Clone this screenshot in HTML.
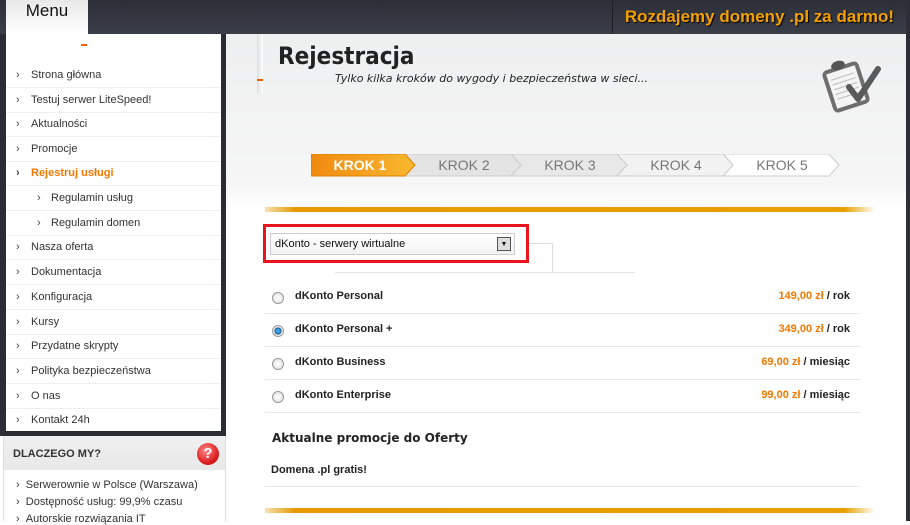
<!DOCTYPE html>
<html><head><meta charset="utf-8"><style>
*{margin:0;padding:0;box-sizing:border-box}
body{width:910px;height:521px;overflow:hidden;background:#fff;font-family:"Liberation Sans",sans-serif;position:relative}
.top{position:absolute;left:0;top:0;width:910px;height:34px;background:linear-gradient(#2c2f38,#3a3e48)}
.promo{position:absolute;left:612px;top:0;width:294px;height:34px;border-left:1px solid #1c1e24;color:#f5a000;font-weight:bold;font-size:17px;line-height:34px;text-align:center;text-shadow:1px 1px 1px #000}
.rightedge{position:absolute;left:906px;top:0;width:4px;height:521px;background:#2c2f38}
.tab{position:absolute;left:6px;top:0;width:82px;height:34px;background:linear-gradient(#e9e9e9,#fff);font-size:17px;text-align:center;line-height:22px;color:#111}
.sidebar{position:absolute;left:0;top:34px;width:226px;height:402px;background:#2a2d36}
.menu{position:absolute;left:6px;top:34px;width:215px;height:397px;background:#fff}
.menu div{position:absolute;left:0;width:215px;height:25px;font-size:11px;color:#333;line-height:25px;padding-left:25px;border-bottom:1px solid #eee}
.menu div:before{content:"›";position:absolute;left:10px;color:#444}
.menu .sub{padding-left:45px}.menu .sub:before{left:31px}
.menu .act{color:#f07800;font-weight:bold}
.why{position:absolute;left:3px;top:436px;width:223px;height:85px;background:#fff;border-left:1px solid #ddd;border-right:1px solid #ddd}
.why h{position:absolute;left:0;top:0;width:221px;height:34px;background:linear-gradient(#f0f0f0,#e8e8e8);font-weight:bold;font-size:11px;color:#333;line-height:36px;padding-left:9px}
.why .q{position:absolute;left:193px;top:7px;width:22px;height:22px;border-radius:50%;background:radial-gradient(circle at 40% 35%,#f88,#d22 60%,#a00);color:#fff;font-weight:bold;font-size:15px;text-align:center;line-height:22px}
.why p{position:absolute;left:12px;font-size:11px;color:#333}
.main{position:absolute;left:226px;top:34px;width:680px;height:487px;background:linear-gradient(#eeeff0 0px,#f6f6f6 150px,#fff 175px)}
h1{position:absolute;left:278px;top:42px;font-size:24px;color:#222;font-family:"DejaVu Sans Condensed","DejaVu Sans",sans-serif;font-weight:bold}
.sub1{position:absolute;left:335px;top:72px;font-size:11px;font-style:italic;color:#222;font-family:"DejaVu Sans",sans-serif}
.ora{position:absolute;left:265px;top:207px;width:610px;height:5px;background:linear-gradient(90deg,rgba(230,150,0,.3),#e69a00 5%,#e8a000 95%,rgba(240,170,0,0))}
.red{position:absolute;left:263px;top:224px;width:266px;height:39px;border:3px solid #e8141e}
.sel{position:absolute;left:270px;top:233px;width:245px;height:22px;border:1px solid #ccc;background:linear-gradient(#fff,#f3f3f3);font-size:11px;line-height:20px;padding-left:4px;color:#111}
.sel b{position:absolute;right:3px;top:3px;width:14px;height:14px;border:1px solid #555;background:#ddd;font-size:7px;line-height:13px;text-align:center}
.row{position:absolute;left:265px;width:595px;height:33px;border-bottom:1px solid #e8e8e8;font-size:11px;font-weight:bold;color:#222}
.row .r{position:absolute;left:7px;top:11px;width:12px;height:12px;border-radius:50%;border:1px solid #999;background:radial-gradient(#fff,#ddd)}
.row .r.on{background:radial-gradient(#3a9ee0 30%,#0b4a80 45%,#eee 55%)}
.row .n{position:absolute;left:30px;top:9px}
.row .p{position:absolute;right:10px;top:9px}
.row .p i{font-style:normal;color:#f07800}
</style></head><body>
<div class="top"></div>
<div class="promo">Rozdajemy domeny .pl za darmo!</div>
<div class="sidebar"></div>
<div class="tab">Menu</div>
<div class="menu">
<div style="top:29px">Strona główna</div>
<div style="top:54px">Testuj serwer LiteSpeed!</div>
<div style="top:78px">Aktualności</div>
<div style="top:103px">Promocje</div>
<div style="top:127px" class="act">Rejestruj usługi</div>
<div style="top:152px" class="sub">Regulamin usług</div>
<div style="top:177px" class="sub">Regulamin domen</div>
<div style="top:201px">Nasza oferta</div>
<div style="top:226px">Dokumentacja</div>
<div style="top:251px">Konfiguracja</div>
<div style="top:276px">Kursy</div>
<div style="top:300px">Przydatne skrypty</div>
<div style="top:325px">Polityka bezpieczeństwa</div>
<div style="top:350px">O nas</div>
<div style="top:372px;border:0;top:374px;height:23px">Kontakt 24h</div>
</div>
<div class="main"></div>
<div class="rightedge"></div>
<div style="position:absolute;left:81px;top:44px;width:6px;height:2px;background:#f06000"></div>
<div style="position:absolute;left:257px;top:34px;width:6px;height:60px;background:linear-gradient(90deg,#ddd,#fff)"></div>
<div style="position:absolute;left:257px;top:79px;width:6px;height:2px;background:#f06000"></div>
<div class="why"><h>DLACZEGO MY?</h><div class="q">?</div>
<p style="top:43px">› &nbsp;Serwerownie w Polsce (Warszawa)</p>
<p style="top:60px">› &nbsp;Dostępność usług: 99,9% czasu</p>
<p style="top:77px">› &nbsp;Autorskie rozwiązania IT</p></div>
<h1>Rejestracja</h1>
<div class="sub1">Tylko kilka kroków do wygody i bezpieczeństwa w sieci...</div>
<svg style="position:absolute;left:822px;top:55px" width="62" height="58" viewBox="0 0 62 58">
<g transform="rotate(-18 24 32)">
<rect x="5" y="10" width="38" height="44" rx="5" fill="#6e6e6e"/>
<rect x="9" y="14" width="30" height="36" fill="#f4f4f4"/>
<g stroke="#bbb"><line x1="12" y1="21" x2="36" y2="21"/><line x1="12" y1="26" x2="36" y2="26"/><line x1="12" y1="31" x2="36" y2="31"/><line x1="12" y1="36" x2="36" y2="36"/><line x1="12" y1="41" x2="36" y2="41"/></g>
<ellipse cx="23" cy="9" rx="7" ry="4.5" fill="#555"/>
</g>
<path d="M27 32 L36 44 L56 14" fill="none" stroke="#5a5a5a" stroke-width="6" stroke-linejoin="round" stroke-linecap="round"/>
</svg>
<svg style="position:absolute;left:311px;top:154px" width="530" height="23">
<defs><linearGradient id="o" x1="0" x2="1"><stop offset="0" stop-color="#f08a10"/><stop offset="1" stop-color="#f8b830"/></linearGradient></defs>
<polygon points="518,0 528,11 518,22 412,22 422,11 412,0" fill="#fff" stroke="#ccc"/>
<polygon points="412,0 422,11 412,22 306,22 316,11 306,0" fill="#f2f2f2" stroke="#ccc"/>
<polygon points="306,0 316,11 306,22 200,22 210,11 200,0" fill="#e8e8e8" stroke="#ccc"/>
<polygon points="200,0 210,11 200,22 94,22 104,11 94,0" fill="#e4e4e4" stroke="#ccc"/>
<polygon points="0,0 94,0 104,11 94,22 0,22" fill="url(#o)" stroke="#e08000"/>
<g font-family="Liberation Sans" font-size="14" text-anchor="middle" fill="#777"><text x="49" y="16" fill="#fff" font-weight="bold">KROK 1</text><text x="153" y="16">KROK 2</text><text x="259" y="16">KROK 3</text><text x="365" y="16">KROK 4</text><text x="471" y="16">KROK 5</text></g>
</svg>
<div class="ora"></div>
<div style="position:absolute;left:529px;top:243px;width:24px;height:1px;background:#ddd"></div>
<div style="position:absolute;left:552px;top:243px;width:1px;height:30px;background:#ddd"></div>
<div style="position:absolute;left:335px;top:272px;width:300px;height:1px;background:#e5e5e5"></div>
<div class="red"></div>
<div class="sel">dKonto - serwery wirtualne<b>▼</b></div>
<div class="row" style="top:281px"><span class="r"></span><span class="n">dKonto Personal</span><span class="p"><i>149,00 zł</i> / rok</span></div>
<div class="row" style="top:314px"><span class="r on"></span><span class="n">dKonto Personal +</span><span class="p"><i>349,00 zł</i> / rok</span></div>
<div class="row" style="top:347px"><span class="r"></span><span class="n">dKonto Business</span><span class="p"><i>69,00 zł</i> / miesiąc</span></div>
<div class="row" style="top:380px"><span class="r"></span><span class="n">dKonto Enterprise</span><span class="p"><i>99,00 zł</i> / miesiąc</span></div>
<div style="position:absolute;left:272px;top:431px;font-size:12px;font-weight:bold;color:#222;font-family:'DejaVu Sans',sans-serif">Aktualne promocje do Oferty</div>
<div style="position:absolute;left:271px;top:464px;font-size:11px;font-weight:bold;color:#222">Domena .pl gratis!</div>
<div style="position:absolute;left:265px;top:486px;width:595px;height:1px;background:#e8e8e8"></div>
<div class="ora" style="top:508px"></div>
</body></html>
